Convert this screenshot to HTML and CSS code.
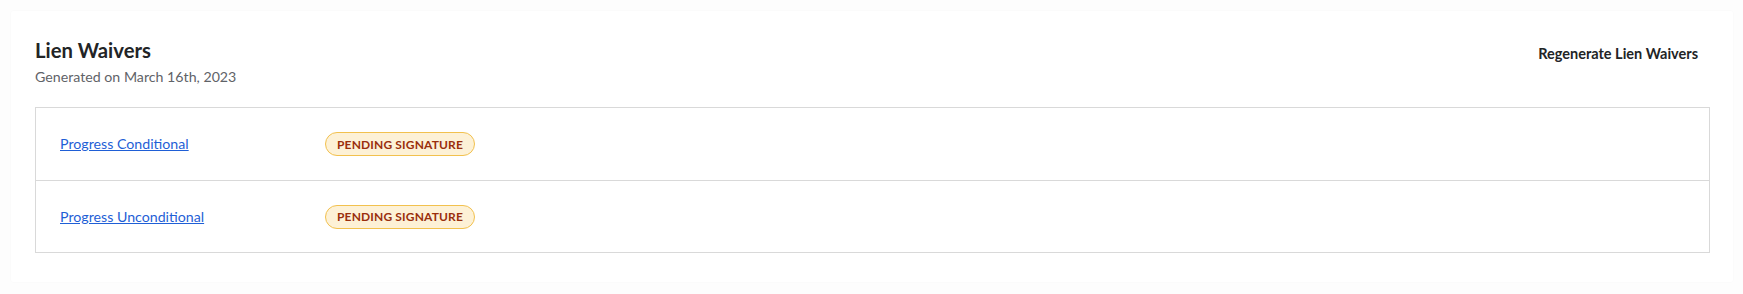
FILE: index.html
```html
<!DOCTYPE html>
<html lang="en">
<head>
<meta charset="utf-8">
<title>Lien Waivers</title>
<link rel="stylesheet" href="styles.css">
</head>
<body>
<section class="card">
  <header class="card-header">
    <div class="heading">
      <h2 class="title">Lien Waivers</h2>
      <p class="subtitle">Generated on March 16th, 2023</p>
    </div>
    <button class="regen" type="button">Regenerate Lien Waivers</button>
  </header>
  <div class="table">
    <div class="row">
      <a class="doc-link" href="#">Progress Conditional</a>
      <span class="badge">Pending Signature</span>
    </div>
    <div class="row">
      <a class="doc-link" href="#">Progress Unconditional</a>
      <span class="badge">Pending Signature</span>
    </div>
  </div>
</section>
</body>
</html>
```

FILE: styles.css
```css
* { box-sizing: border-box; }
html, body {
  margin: 0;
  background: #fdfdfd;
}
body {
  padding: 11px 10px 8px 11px;
  font-family: Lato, "Open Sans", Arial, sans-serif;
  color: #222426;
}
.card {
  background: #ffffff;
  border-radius: 2px;
  box-shadow: 0 0 2px rgba(0, 0, 0, 0.03);
  padding: 26px 23px 29px 24px;
}
.card-header {
  display: flex;
  justify-content: space-between;
  align-items: flex-start;
}
.title {
  margin: 0;
  font-size: 20.3px;
  font-weight: 700;
  line-height: 26px;
  color: #222426;
}
.subtitle {
  margin: 4px 0 0;
  font-size: 14.2px;
  line-height: 20px;
  color: #5f6368;
}
.regen {
  margin-top: 7px;
  margin-right: 12px;
  border: 0;
  background: transparent;
  padding: 0;
  font-family: inherit;
  font-size: 14.5px;
  font-weight: 700;
  color: #222426;
  line-height: 20px;
  cursor: pointer;
}
.table {
  margin-top: 20px;
  border: 1px solid #d9d9d9;
}
.row {
  display: grid;
  grid-template-columns: 265px 1fr;
  align-items: center;
  height: 72px;
  padding: 0 24px;
}
.row + .row {
  border-top: 1px solid #d9d9d9;
  height: 72px;
}
.doc-link {
  justify-self: start;
  font-size: 14.2px;
  line-height: 20px;
  color: #1f5fd6;
  text-decoration: underline;
}
.badge {
  justify-self: start;
  display: inline-flex;
  align-items: center;
  height: 24px;
  padding: 0 11px;
  border: 1px solid #f2c14e;
  border-radius: 12px;
  background: #fdf1d6;
  color: #9a2f0c;
  font-size: 12px;
  font-weight: 700;
  text-transform: uppercase;
  letter-spacing: 0.15px;
}
```
